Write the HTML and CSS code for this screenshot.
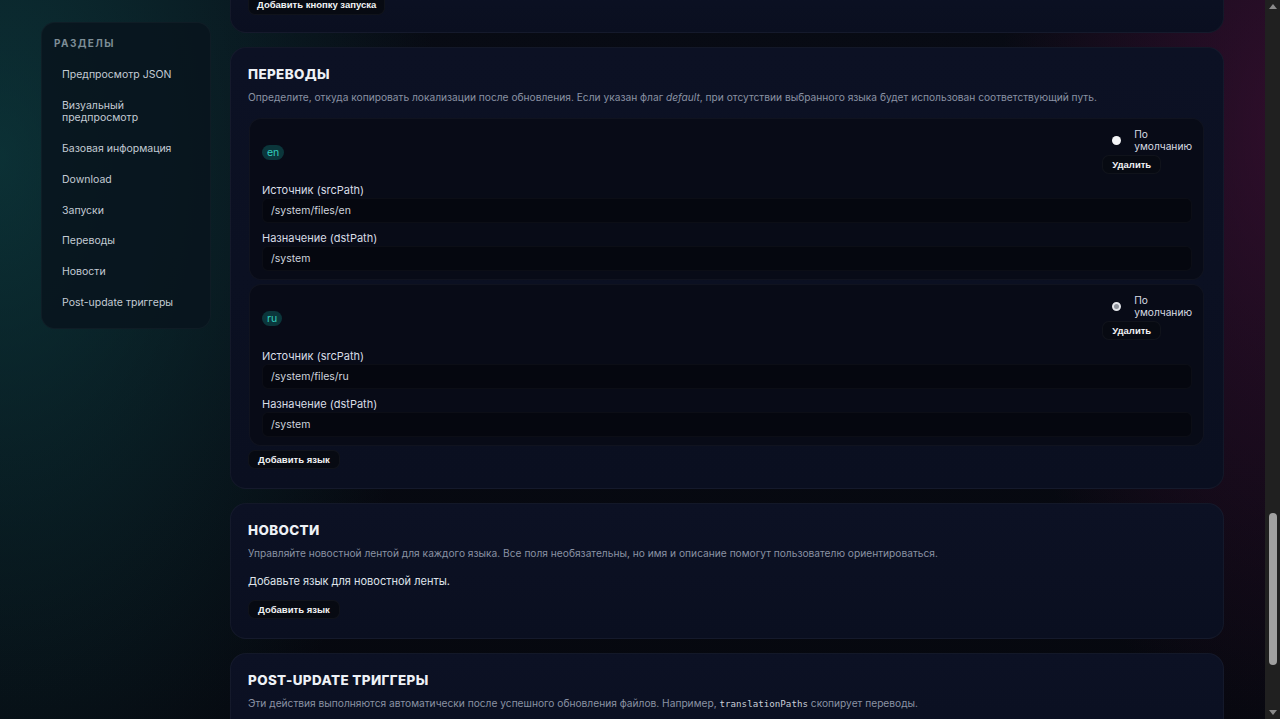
FILE: index.html
```html
<!DOCTYPE html>
<html lang="ru">
<head>
<meta charset="utf-8">
<title>Редактор</title>
<link rel="stylesheet" href="styles.css">
</head>
<body>
<div class="page">
<div class="layout">
  <aside class="sidebar">
    <div class="side-title">Разделы</div>
    <nav class="side-nav">
      <a class="side-link">Предпросмотр JSON</a>
      <a class="side-link">Визуальный предпросмотр</a>
      <a class="side-link">Базовая информация</a>
      <a class="side-link">Download</a>
      <a class="side-link">Запуски</a>
      <a class="side-link">Переводы</a>
      <a class="side-link">Новости</a>
      <a class="side-link">Post-update триггеры</a>
    </nav>
  </aside>
  <main class="content">
    <section class="card card-cut">
      <button class="btn">Добавить кнопку запуска</button>
    </section>

    <section class="card">
      <h2 class="card-title">Переводы</h2>
      <p class="desc">Определите, откуда копировать локализации после обновления. Если указан флаг <em>default</em>, при отсутствии выбранного языка будет использован соответствующий путь.</p>
      <div class="items">
        <div class="item">
          <div class="item-head">
            <span class="tag">en</span>
            <div class="item-actions">
              <div class="radio-row"><span class="radio"></span><span class="radio-label">По умолчанию</span></div>
              <button class="btn btn-small">Удалить</button>
            </div>
          </div>
          <div class="field">
            <div class="field-label">Источник (srcPath)</div>
            <div class="input">/system/files/en</div>
          </div>
          <div class="field">
            <div class="field-label">Назначение (dstPath)</div>
            <div class="input">/system</div>
          </div>
        </div>
        <div class="item">
          <div class="item-head">
            <span class="tag">ru</span>
            <div class="item-actions">
              <div class="radio-row"><span class="radio radio-on"></span><span class="radio-label">По умолчанию</span></div>
              <button class="btn btn-small">Удалить</button>
            </div>
          </div>
          <div class="field">
            <div class="field-label">Источник (srcPath)</div>
            <div class="input">/system/files/ru</div>
          </div>
          <div class="field">
            <div class="field-label">Назначение (dstPath)</div>
            <div class="input">/system</div>
          </div>
        </div>
      </div>
      <button class="btn btn-after">Добавить язык</button>
    </section>

    <section class="card">
      <h2 class="card-title">Новости</h2>
      <p class="desc">Управляйте новостной лентой для каждого языка. Все поля необязательны, но имя и описание помогут пользователю ориентироваться.</p>
      <p class="note">Добавьте язык для новостной ленты.</p>
      <button class="btn btn-note">Добавить язык</button>
    </section>

    <section class="card card-last">
      <h2 class="card-title">Post-update триггеры</h2>
      <p class="desc">Эти действия выполняются автоматически после успешного обновления файлов. Например, <code>translationPaths</code> скопирует переводы.</p>
    </section>
  </main>
</div>
</div>
<div class="scrollbar" aria-hidden="true">
  <span class="sb-arrow sb-up"></span>
  <span class="sb-thumb"></span>
  <span class="sb-fill"></span>
  <span class="sb-arrow sb-down"></span>
</div>
</body>
</html>
```

FILE: styles.css
```css
html {
  background: #070910;
}

body {
  margin: 0;
  height: 100vh;
  overflow: hidden;
  display: flex;
  font-family: Inter, "Noto Sans", sans-serif;
  color: #d5dae3;
  background:
    radial-gradient(ellipse 440px 720px at 0% 22%, rgba(14, 74, 76, 0.6), rgba(14, 74, 76, 0) 100%),
    radial-gradient(ellipse 280px 620px at 100% 18%, rgba(72, 16, 58, 0.6), rgba(72, 16, 58, 0) 100%),
    linear-gradient(180deg, #080b14 0%, #06080f 100%);
}

.page {
  flex: 1;
  min-width: 0;
  height: 100vh;
  overflow: hidden;
}

/* fake browser scrollbar */
.scrollbar {
  flex: none;
  width: 15px;
  height: 100vh;
  background: #202020;
  display: flex;
  flex-direction: column;
  align-items: center;
}

.sb-arrow {
  width: 0;
  height: 0;
  border-left: 4px solid transparent;
  border-right: 4px solid transparent;
}

.sb-up {
  margin-top: 4px;
  border-bottom: 5px solid #8a8a8a;
}

.sb-down {
  margin-bottom: 4px;
  border-top: 5px solid #8a8a8a;
}

.sb-thumb {
  margin-top: 504px;
  width: 8px;
  height: 152px;
  border-radius: 4px;
  background: #a0a0a0;
}

.sb-fill {
  flex: 1;
}

.layout {
  display: grid;
  grid-template-columns: 170px 1fr;
  column-gap: 19px;
  padding: 0 41px 0 41px;
  align-items: start;
}

/* Sidebar */
.sidebar {
  margin-top: 22px;
  background: rgba(8, 20, 30, 0.88);
  border: 1px solid rgba(255, 255, 255, 0.03);
  border-radius: 14px;
  padding: 14px 12px 10px 12px;
}

.side-title {
  font-size: 10px;
  line-height: 12px;
  font-weight: 700;
  letter-spacing: 1.4px;
  text-transform: uppercase;
  color: #7d8d96;
  padding-bottom: 11px;
}

.side-nav {
  display: flex;
  flex-direction: column;
}

.side-link {
  display: block;
  padding: 9.4px 20px 9.4px 8px;
  font-size: 10.5px;
  line-height: 12px;
  color: #c3cbd4;
}

/* Content */
.content {
  display: flex;
  flex-direction: column;
  gap: 14px;
  margin-top: -27px;
}

.card {
  background: linear-gradient(180deg, #0c1124 0%, #0a0f20 100%);
  border: 1px solid rgba(255, 255, 255, 0.04);
  border-radius: 16px;
  padding: 18px 19px 19px 17px;
}

.card-cut {
  padding-bottom: 17px;
}

.card-last {
  padding-bottom: 60px;
}

.card-title {
  margin: 0;
  font-size: 13.4px;
  line-height: 16px;
  font-weight: 800;
  letter-spacing: 0.4px;
  text-transform: uppercase;
  color: #eef1f6;
}

.desc {
  margin: 8px 0 0 0;
  font-size: 10.2px;
  line-height: 14px;
  color: #8a92a3;
}

.desc em {
  font-style: italic;
}

.desc code {
  font-family: "DejaVu Sans Mono", "Liberation Mono", monospace;
  font-size: 9.2px;
  color: #c9ced8;
}

.note {
  margin: 14px 0 0 0;
  font-size: 11px;
  line-height: 14px;
  color: #dfe3ea;
}

.btn {
  display: inline-block;
  align-self: flex-start;
  font-family: "Liberation Sans", Arial, sans-serif;
  font-weight: 700;
  font-size: 9.5px;
  line-height: 11px;
  color: #f1f2f5;
  background: #070a12;
  border: 1px solid rgba(255, 255, 255, 0.04);
  border-radius: 7px;
  padding: 3px 9px 3px 9px;
  cursor: pointer;
}

.card-cut .btn {
  padding: 4px 8px;
}

.btn-after {
  margin-top: 4px;
}

.btn-note {
  margin-top: 12px;
}

.items {
  display: flex;
  flex-direction: column;
  gap: 4px;
  margin-top: 14px;
  margin-left: 1px;
}

.item {
  background: #080b17;
  border: 1px solid rgba(255, 255, 255, 0.035);
  border-radius: 12px;
  padding: 9px 11px 8px 12px;
}

.item-head {
  display: flex;
  justify-content: space-between;
  align-items: center;
}

.tag {
  display: inline-block;
  font-size: 10.5px;
  line-height: 15px;
  padding: 0 5px;
  border-radius: 8px;
  background: #0b363b;
  color: #33d0bf;
  margin-top: 3px;
}

.item-actions {
  display: flex;
  flex-direction: column;
  align-items: flex-start;
  gap: 3px;
}

.radio-row {
  display: flex;
  align-items: center;
  gap: 13px;
  padding-left: 10px;
}

.radio {
  width: 9px;
  height: 9px;
  border-radius: 50%;
  background: #f4f5f7;
  flex: none;
}

.radio-on {
  width: 5px;
  height: 5px;
  background: #8f949c;
  border: 2px solid #e4e6ea;
}

.radio-label {
  width: min-content;
  font-size: 10.2px;
  line-height: 12px;
  color: #d9dde4;
}

.btn-small {
  padding: 3px 9px 3px 9px;
}

.field {
  margin-top: 9px;
  display: flex;
  flex-direction: column;
}

.field + .field {
  margin-top: 8px;
}

.field-label {
  font-size: 11px;
  line-height: 14px;
  color: #d8dde6;
}

.input {
  margin-top: 1px;
  height: 25px;
  box-sizing: border-box;
  padding: 0 8px;
  display: flex;
  align-items: center;
  background: #05070f;
  border: 1px solid rgba(255, 255, 255, 0.03);
  border-radius: 6px;
  font-size: 10.5px;
  color: #cfd4de;
}
```
